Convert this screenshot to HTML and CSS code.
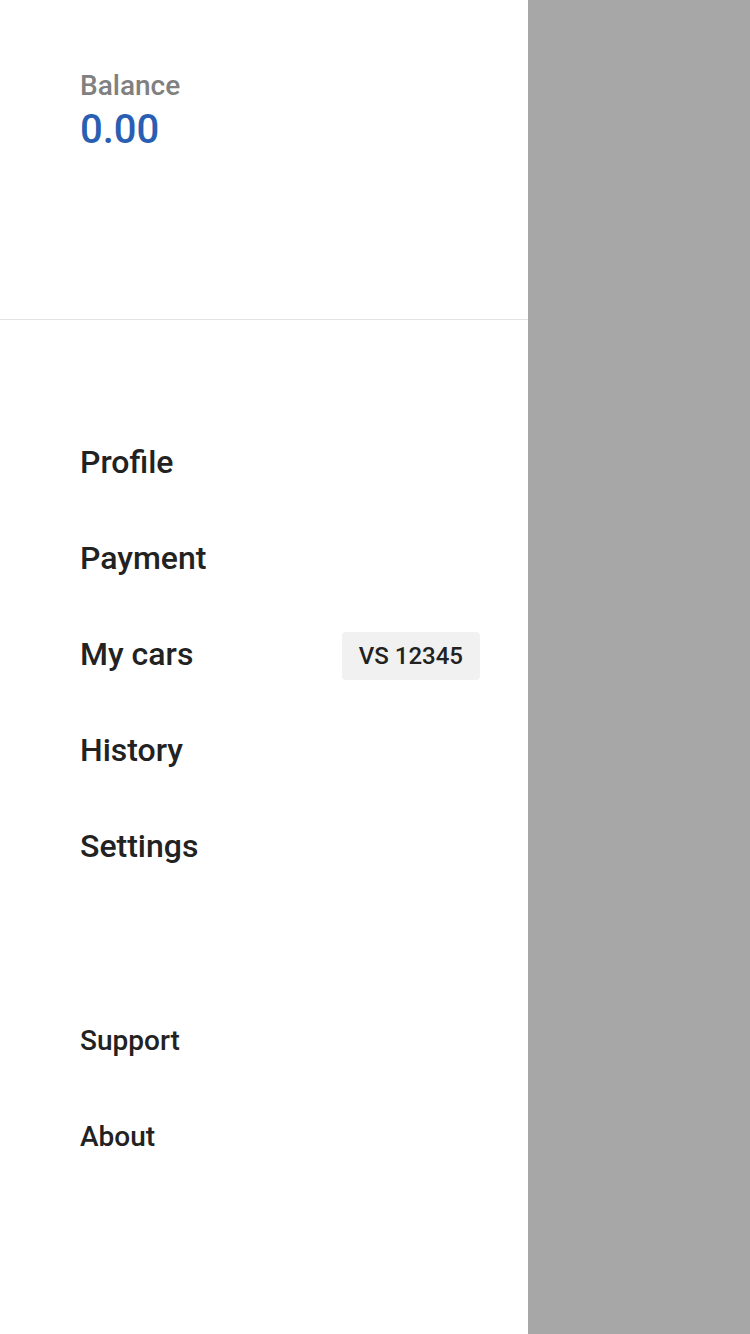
FILE: index.html
```html
<!DOCTYPE html>
<html>
<head>
<meta charset="utf-8">
<link rel="stylesheet" href="styles.css">
</head>
<body>
<div class="screen">
  <aside class="drawer">
    <header class="balance">
      <div class="balance-label">Balance</div>
      <div class="balance-value">0.00</div>
    </header>
    <nav class="menu">
      <div class="item">Profile</div>
      <div class="item">Payment</div>
      <div class="item">My cars <span class="badge">VS 12345</span></div>
      <div class="item">History</div>
      <div class="item">Settings</div>
    </nav>
    <nav class="menu secondary">
      <div class="item small">Support</div>
      <div class="item small">About</div>
    </nav>
  </aside>
  <div class="overlay"></div>
</div>
</body>
</html>
```

FILE: styles.css
```css
html, body {
  margin: 0;
  padding: 0;
}
body {
  font-family: Roboto, "Liberation Sans", sans-serif;
  width: 750px;
  height: 1334px;
  overflow: hidden;
}
.screen {
  display: flex;
  height: 1334px;
}
.drawer {
  width: 528px;
  background: #ffffff;
  display: flex;
  flex-direction: column;
}
.overlay {
  flex: 1;
  background: #a7a7a7;
}
.balance {
  border-bottom: 1px solid #e3e3e3;
  padding: 70px 80px 0;
  box-sizing: border-box;
  height: 320px;
}
.balance-label {
  font-size: 28px;
  line-height: 32px;
  font-weight: 500;
  color: #808080;
}
.balance-value {
  margin-top: 4px;
  font-size: 40px;
  line-height: 48px;
  font-weight: 500;
  color: #2a5eb2;
}
.menu {
  padding: 94px 48px 0 80px;
  display: flex;
  flex-direction: column;
}
.menu.secondary {
  padding-top: 98px;
}
.item {
  height: 96px;
  display: flex;
  align-items: center;
  justify-content: space-between;
  font-size: 32px;
  font-weight: 500;
  color: #222222;
}
.item.small {
  font-size: 28px;
}
.badge {
  margin-top: 4px;
  height: 48px;
  padding: 0 17px;
  display: flex;
  align-items: center;
  background: #f1f1f1;
  border-radius: 4px;
  font-size: 24px;
  font-weight: 500;
  color: #222222;
}
```
